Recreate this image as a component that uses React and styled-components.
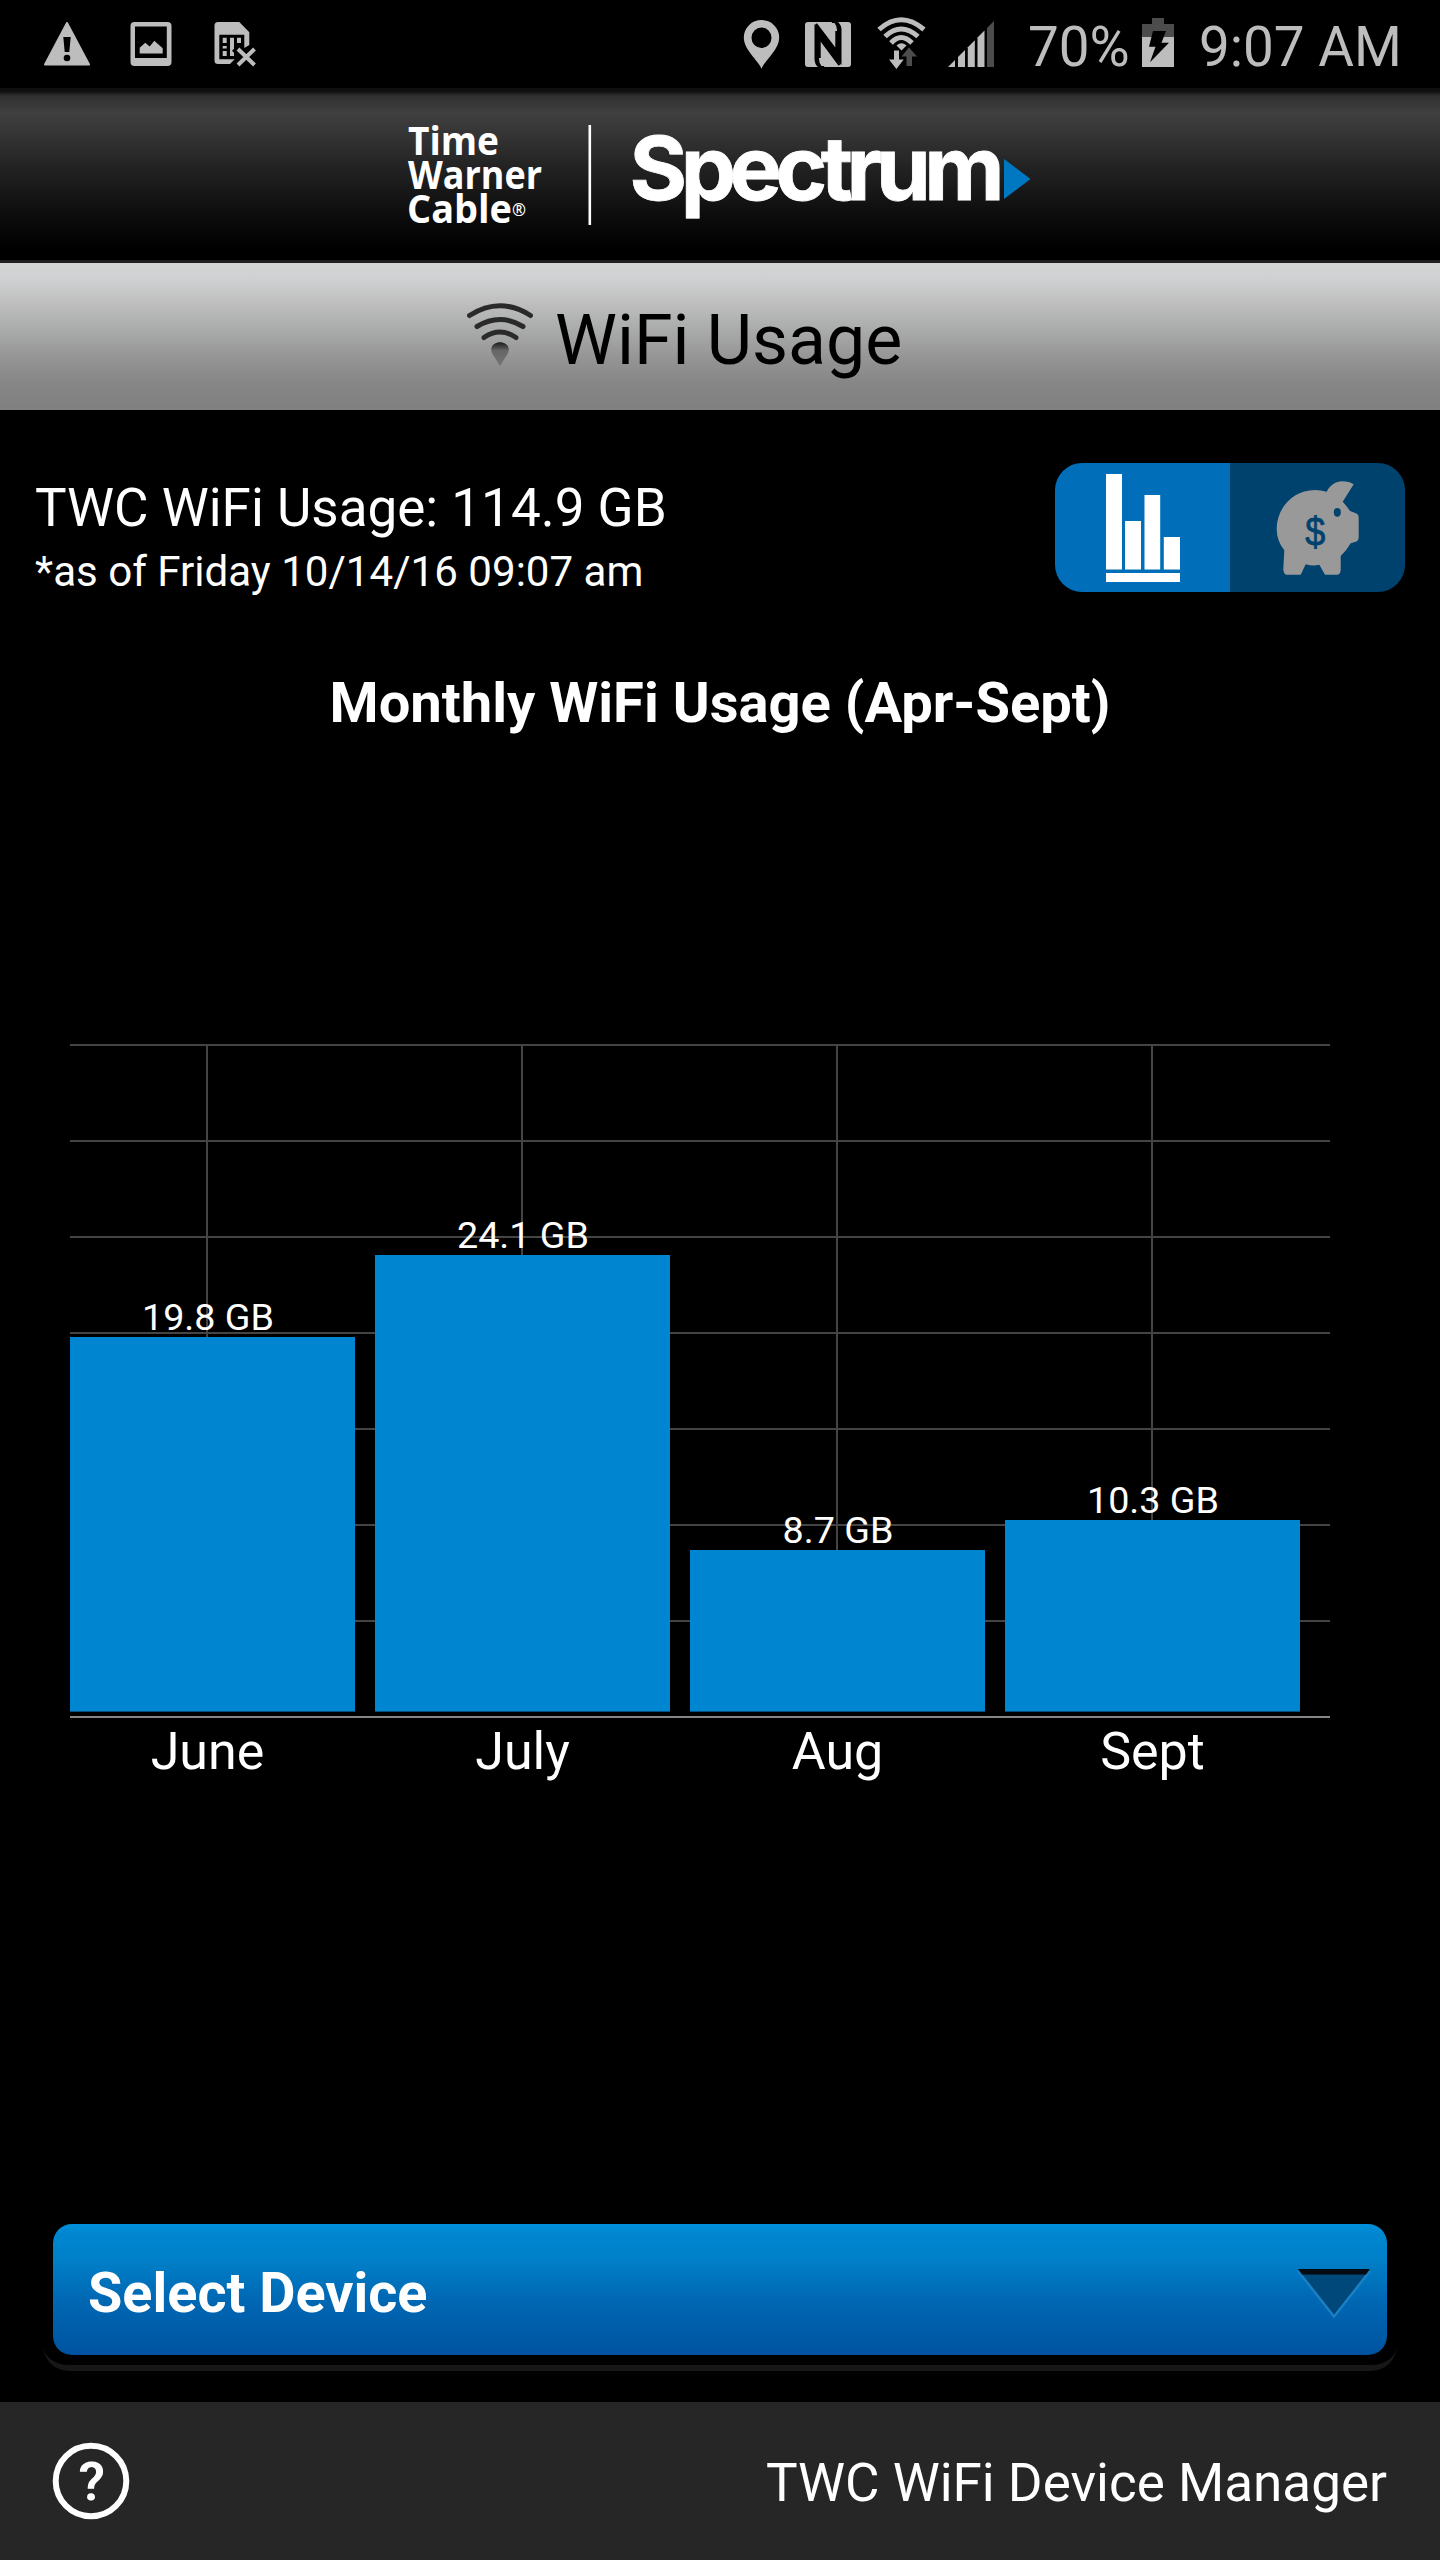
import React, { Component } from 'react';
import styled, { createGlobalStyle } from 'styled-components';

const usage = [
  { month: 'June', label: '19.8 GB', left: 0, width: 285, height: 374 },
  { month: 'July', label: '24.1 GB', left: 305, width: 295, height: 456 },
  { month: 'Aug', label: '8.7 GB', left: 620, width: 295, height: 161 },
  { month: 'Sept', label: '10.3 GB', left: 935, width: 295, height: 191 },
];

const gridRows = [0, 96, 192, 288, 384, 480, 576];

/* ---------- icons ---------- */

const WarningIcon = () => (
  <svg width="48" height="48" viewBox="0 0 48 48">
    <path d="M24 3 L46 44.5 H2 Z" fill="#bdbdbd" stroke="#bdbdbd" strokeWidth="2" strokeLinejoin="round" />
    <path d="M20.3 17 H27.7 L26.3 32 H21.7 Z" fill="#000" />
    <circle cx="24" cy="38" r="3.3" fill="#000" />
  </svg>
);

const PictureIcon = () => (
  <svg width="48" height="48" viewBox="0 0 48 48" fill="#bdbdbd">
    <path fillRule="evenodd" d="M7.5 2 H40.5 Q44.5 2 44.5 6 V42 Q44.5 46 40.5 46 H7.5 Q3.5 46 3.5 42 V6 Q3.5 2 7.5 2 Z M8 6.5 V38 H39.8 V6.5 Z" />
    <path d="M12.7 33.5 V27.7 L18.3 22.7 L22.7 26.5 L27.3 20.7 L35.7 28.3 V33.5 Z" />
  </svg>
);

const SimIcon = () => (
  <svg width="48" height="48" viewBox="0 0 48 48" fill="#bdbdbd">
    <path fillRule="evenodd" d="M7 2 H28.3 L38.3 12.3 V25 L33.3 28 V14.7 H8.3 V39.3 H23.7 L19 44 H7 Q3.5 44 3.5 40.5 V5.5 Q3.5 2 7 2 Z" />
    <path d="M11.7 17.7 h4 v5.3 h-4 Z M11.7 26 h4 v2.4 h-4 Z M11.7 31 h4 v5 h-4 Z M19 17.7 h4 v11 l-2 2 l2 2 V36 h-4 Z M26 17.7 h4 v5.3 h-4 Z" />
    <path d="M27 29 L43.5 45 M43.5 29 L27 45" stroke="#000" strokeWidth="8" />
    <path d="M27 29 L43.5 45 M43.5 29 L27 45" stroke="#bdbdbd" strokeWidth="4" />
  </svg>
);

const PinIcon = () => (
  <svg width="37" height="49" viewBox="0 0 37 49">
    <path
      fill="#bdbdbd"
      fillRule="evenodd"
      d="M18.5 48.7 C15 40 .8 30 .8 17.5 A17.7 17.5 0 0 1 36.2 17.5 C36.2 30 22 40 18.5 48.7 Z M18.5 7.4 A10 10.3 0 1 0 18.5 28 A10 10.3 0 1 0 18.5 7.4 Z"
    />
  </svg>
);

const NfcIcon = () => (
  <svg width="46" height="45" viewBox="0 0 46 45">
    <rect width="46" height="45" rx="3" fill="#bdbdbd" />
    <path d="M9.5 2 L29.5 22 V7 Q29.5 3 26.5 0 H33 Q36.5 3 36.5 8 V43 L16.5 23 V38 Q16.5 42 19.5 45 H13 Q9.5 42 9.5 37 Z" fill="#000" />
    <path d="M12 3 L32 31 V8 Q32 4 29.5 1 H11 Z M34 42 L14 14 V37 Q14 41 16.5 44 H35 Z" fill="#bdbdbd" />
    <path d="M11 2 L31.5 29 V9 M34.5 43 L14.5 16 V36" fill="none" stroke="#000" strokeWidth="2.4" />
  </svg>
);

const WifiDataIcon = () => (
  <svg width="49" height="53" viewBox="0 0 49 53">
    <g fill="none" stroke="#bdbdbd" strokeWidth="5">
      <path d="M2 12.5 Q24 -7 47 12.5" />
      <path d="M8 19.5 Q24 4.5 41 19.5" />
      <path d="M14 26 Q24 15 35 26" />
    </g>
    <path d="M19.5 28.5 Q24.5 24 29.5 28.5 L24.5 33.5 Z" fill="#bdbdbd" />
    <path d="M32 30.5 L40 39.5 H35 V49 H29.5 V39.5 H24.5 Z" fill="#4c4c4c" />
    <path d="M17 33.5 H22 V42.5 H26.7 L19.4 52 L12 42.5 H17 Z" fill="#bdbdbd" />
  </svg>
);

const SignalIcon = () => (
  <svg width="47" height="46" viewBox="0 0 47 46">
    {[0, 10, 19.8, 29.5, 39].map((x) => (
      <path
        key={x}
        d={`M${x} 46 V${46 - x} L${x + 7} ${39 - x} V46 Z`}
        fill={x === 39 ? '#4c4c4c' : '#bdbdbd'}
      />
    ))}
  </svg>
);

const BatteryIcon = () => (
  <svg width="32" height="49" viewBox="0 0 32 49">
    <path d="M10 0 H22 V6 H32 V19 H0 V6 H10 Z" fill="#4c4c4c" />
    <path d="M0 19 H32 V49 H0 Z" fill="#bdbdbd" />
    <path d="M11 13 H24 L19.5 24.7 H27 L8 44.3 L13.5 28.7 H7 Z" fill="#000" />
  </svg>
);

const BrandLogo = () => (
  <svg width="640" height="172" viewBox="0 0 640 172" overflow="visible">
    <g fill="#fff" fontFamily="'Open Sans', 'Noto Sans', sans-serif" fontWeight="700" fontSize="39">
      <text x="8" y="67" textLength="91" lengthAdjust="spacingAndGlyphs">Time</text>
      <text x="8" y="101" textLength="134" lengthAdjust="spacingAndGlyphs">Warner</text>
      <text x="7" y="135" textLength="105" lengthAdjust="spacingAndGlyphs">Cable</text>
      <text x="112" y="128" fontSize="18" fontWeight="600" textLength="14" lengthAdjust="spacingAndGlyphs">®</text>
    </g>
    <rect x="188.5" y="37" width="2.6" height="100" fill="#fff" />
    <text
      x="229.5"
      y="111.5"
      fill="#fff"
      stroke="#fff"
      strokeWidth="0.8"
      fontFamily="Inter, sans-serif"
      fontWeight="700"
      fontSize="88"
      textLength="375"
      lengthAdjust="spacing"
    >
      Spectrum
    </text>
    <path d="M604 71 L630.5 91 L604 111 Z" fill="#0078c1" />
  </svg>
);

const WifiIcon = () => (
  <svg width="66" height="64" viewBox="0 0 66 64">
    <defs>
      <linearGradient id="drop" x1="0" y1="0" x2="0" y2="1">
        <stop offset="0" stopColor="#1c1c1c" />
        <stop offset="0.35" stopColor="#666" />
        <stop offset="1" stopColor="#747474" />
      </linearGradient>
    </defs>
    <g fill="none" stroke="#2a2a2a" strokeWidth="5" strokeLinecap="round">
      <path d="M2.5 13.5 Q33 -6 63.5 13.5" />
      <path d="M10 24.5 Q33 10.5 56 24.5" />
      <path d="M17 35.5 Q33 24.5 49 35.5" />
    </g>
    <path d="M33 64 L25.5 52 C21.5 44 28 40.3 33 40.3 C38 40.3 44.5 44 40.5 52 Z" fill="url(#drop)" />
  </svg>
);

const BarsIcon = () => (
  <svg width="74" height="108" viewBox="0 0 74 108" fill="#fff">
    <rect x="0" y="0" width="16" height="95.5" />
    <rect x="19" y="47" width="16" height="48.5" />
    <rect x="38.5" y="21" width="15.7" height="74.5" />
    <rect x="57.8" y="63" width="16.2" height="32.5" />
    <rect x="0" y="99" width="74" height="9" />
  </svg>
);

const PiggyIcon = () => (
  <svg width="84" height="95" viewBox="0 0 84 95">
    <path
      fill="#999"
      d="M50.7 10.7 C54 4 60 .3 66 .3 C70.5 .3 75 1.3 77.7 3.2 L66.7 20.7 Q70 24 74 30 L80 32.3 Q82.7 33.5 82.7 36 V57 Q82 60.5 79 61 L74.7 62.3 Q71 69 64.7 75 V89.5 Q64 93.7 61 93.7 H49 L43.3 83.7 Q37 85.5 29.7 83.3 L24.7 93.7 H10 Q7.3 92 7.3 88 L8.3 69.3 Q.7 60 .7 48 C.7 27 17 9 39 9 Q45 9 50.7 10.7 Z"
    />
    <ellipse cx="61.3" cy="31.3" rx="3.5" ry="4.4" fill="#00426e" />
    <text x="39.3" y="64.5" textAnchor="middle" fontFamily="'Liberation Sans', sans-serif" fontSize="41" textLength="20" lengthAdjust="spacingAndGlyphs" fill="#00426e" stroke="#00426e" strokeWidth="0.8">$</text>
  </svg>
);

const ArrowIcon = () => (
  <svg width="76" height="50" viewBox="0 0 76 50">
    <path d="M2 3 L38 48.5 L74 3" fill="none" stroke="#1c7fc4" strokeWidth="2.5" />
    <path d="M3 2 H73 L38 46.5 Z" fill="#00487a" />
    <path d="M2 1 H74 L70 6.5 H6 Z" fill="#020a12" />
  </svg>
);

const HelpIcon = () => (
  <svg width="78" height="78" viewBox="0 0 78 78">
    <circle cx="39" cy="39" r="35.3" fill="none" stroke="#fff" strokeWidth="6" />
    <text x="39.8" y="58" textAnchor="middle" fontFamily="Roboto, sans-serif" fontWeight="600" fontSize="54" fill="#fff">?</text>
  </svg>
);

const UsageChart = () => (
  <svg width="1260" height="760" viewBox="0 0 1260 760">
    {gridRows.map((y) => (
      <rect key={y} x="0" y={y} width="1260" height="2" fill="#444" />
    ))}
    {usage.map((item, i) => (
      <rect key={item.month} x={136 + i * 315} y="0" width="2" height="667" fill="#444" />
    ))}
    {usage.map((item, i) => (
      <g key={item.month} fill="#fff" textAnchor="middle" fontFamily="Roboto, sans-serif">
        <rect x={item.left} y={667 - item.height} width={item.width} height={item.height} fill="#0086d1" />
        <rect x={item.left} y="667" width={item.width} height="1" fill="#004f7c" />
        <text x={138 + i * 315} y={660 - item.height} fontSize="37.7">{item.label}</text>
        <text x={137.5 + i * 315} y="725" fontSize="52">{item.month}</text>
      </g>
    ))}
    <rect x="0" y="672" width="1260" height="2" fill="#868686" />
  </svg>
);

/* ---------- page ---------- */

export default class App extends Component {
  state = { view: 'usage' };

  setView = (view) => {
    this.setState({ view });
  }

  render() {
    const { view } = this.state;
    return (
      <Screen>
        <GlobalStyle />
        <StatusBar>
          <Notifications>
            <WarningIcon />
            <PictureIcon />
            <SimIcon />
          </Notifications>
          <SystemIcons>
            <Slot $w={62}><PinIcon /></Slot>
            <Slot $w={72}><NfcIcon /></Slot>
            <Slot $w={71} $up={1}><WifiDataIcon /></Slot>
            <Slot $w={80}><SignalIcon /></Slot>
            <Slot $w={114}><StatusText>70%</StatusText></Slot>
            <Slot $w={57} $up={2}><BatteryIcon /></Slot>
            <StatusText>9:07 AM</StatusText>
          </SystemIcons>
        </StatusBar>
        <BrandBar>
          <BrandLogo />
        </BrandBar>
        <TitleBar>
          <WifiIcon />
          <PageTitle>WiFi Usage</PageTitle>
        </TitleBar>
        <Content>
          <Summary>
            <div>
              <Total>TWC WiFi Usage: 114.9 GB</Total>
              <AsOf>*as of Friday 10/14/16 09:07 am</AsOf>
            </div>
            <Toggle>
              <ToggleButton $active={view === 'usage'} onClick={() => this.setView('usage')}>
                <BarsIcon />
              </ToggleButton>
              <ToggleButton $active={view === 'savings'} onClick={() => this.setView('savings')}>
                <PiggyIcon />
              </ToggleButton>
            </Toggle>
          </Summary>
          <ChartTitle>Monthly WiFi Usage (Apr-Sept)</ChartTitle>
          <ChartWrapper>
            <UsageChart />
          </ChartWrapper>
          <SelectFrame>
            <SelectButton>
              Select Device
              <ArrowIcon />
            </SelectButton>
          </SelectFrame>
        </Content>
        <Footer>
          <HelpIcon />
          <FooterText>TWC WiFi Device Manager</FooterText>
        </Footer>
      </Screen>
    );
  }
}

const GlobalStyle = createGlobalStyle`
  * {
    box-sizing: border-box;
  }
  body {
    margin: 0;
    background: #000;
  }
  svg {
    display: block;
    flex: none;
  }
`;

const Screen = styled.div`
  display: flex;
  flex-direction: column;
  width: 1440px;
  height: 2560px;
  overflow: hidden;
  background: #000;
  color: #fff;
  font-family: Roboto, sans-serif;
`;

const StatusBar = styled.div`
  display: flex;
  justify-content: space-between;
  align-items: center;
  height: 88px;
  padding: 0 0 0 43px;
  flex: none;
`;

const Notifications = styled.div`
  display: flex;
  gap: 36px;
`;

const SystemIcons = styled.div`
  display: flex;
  align-items: center;
  width: 697px;
`;

const Slot = styled.div`
  width: ${(props) => props.$w}px;
  flex: none;
  padding-bottom: ${(props) => (props.$up || 0) * 2}px;
`;

const StatusText = styled.div`
  color: #bdbdbd;
  font-size: 54.8px;
  line-height: 60px;
  padding-top: 6px;
  white-space: nowrap;
`;

const BrandBar = styled.header`
  display: flex;
  justify-content: center;
  height: 175px;
  flex: none;
  border-bottom: 3px solid #202020;
  background: linear-gradient(#0e0e0e 0, #0e0e0e 3px, #303030 8px, #404040 25px, #222 80px, #0d0d0d 126px, #000 160px);
`;

const TitleBar = styled.div`
  display: flex;
  align-items: flex-start;
  height: 147px;
  padding: 39px 0 0 467px;
  flex: none;
  background: linear-gradient(#d3d4d3 0, #cfd1d3 16px, #c3c3c3 34px, #adaeae 62px, #939493 96px, #868686 120px, #808080 147px);
`;

const PageTitle = styled.h1`
  margin: -3px 0 0 22px;
  color: #000;
  font-size: 69.8px;
  font-weight: 400;
  line-height: 82px;
  white-space: nowrap;
`;

const Content = styled.main`
  display: flex;
  flex-direction: column;
  flex: 1;
`;

const Summary = styled.section`
  display: flex;
  justify-content: space-between;
  height: 182px;
  padding: 53px 35px 0 35px;
`;

const Total = styled.div`
  margin-top: 14px;
  font-size: 53px;
  line-height: 62px;
  white-space: nowrap;
`;

const AsOf = styled.div`
  margin-top: 8px;
  font-size: 42.1px;
  line-height: 50px;
  white-space: nowrap;
`;

const Toggle = styled.div`
  display: flex;
  width: 350px;
  height: 129px;
  border-radius: 27px;
  overflow: hidden;
`;

const ToggleButton = styled.button`
  display: flex;
  align-items: center;
  justify-content: center;
  width: 175px;
  height: 129px;
  padding: 1px 0 0;
  border: 0;
  background: ${(props) => (props.$active ? '#006eb8' : '#00426e')};
`;

const ChartTitle = styled.h2`
  margin: 78px 0 0;
  font-size: 56.1px;
  font-weight: 700;
  line-height: 66px;
  text-align: center;
`;

const ChartWrapper = styled.section`
  padding: 308px 0 0 70px;
`;

const SelectFrame = styled.div`
  margin: auto 43px 31px;
  padding: 0 10px 10px;
  border-bottom: 6px solid #171717;
  border-radius: 26px;
`;

const SelectButton = styled.button`
  display: flex;
  align-items: center;
  justify-content: space-between;
  width: 100%;
  height: 131px;
  padding: 6px 15px 0 35px;
  border: 0;
  border-radius: 19px;
  background: linear-gradient(#0090db 0, #0086cf 10px, #0080c8 35px, #0068b4 75px, #0056a2 124px, #0052a0 131px);
  color: #fff;
  font: 700 55.8px/66px Roboto, sans-serif;
`;

const Footer = styled.footer`
  display: flex;
  align-items: center;
  justify-content: space-between;
  height: 158px;
  padding: 0 53px 0 52px;
  flex: none;
  background: #262626;
`;

const FooterText = styled.div`
  padding-top: 3px;
  font-size: 53px;
  line-height: 62px;
`;
